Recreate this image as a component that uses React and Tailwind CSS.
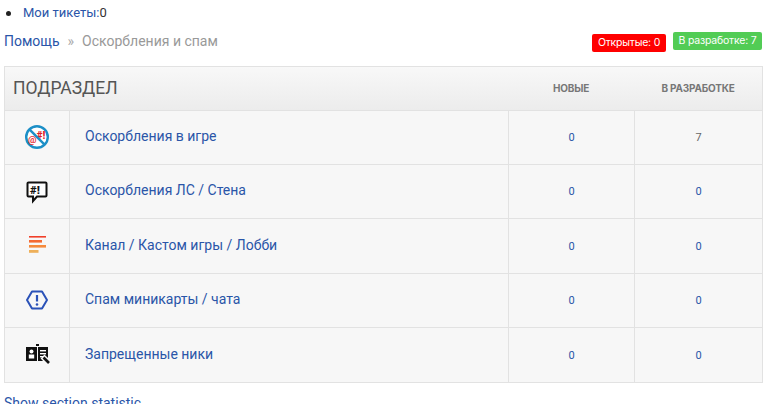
const LINK = "text-[#2a55a8]";

function IconNoSwear() {
  return (
    <svg width="26" height="26" viewBox="0 1 26 26" fill="none">
      <circle cx="13" cy="13" r="10.8" stroke="#1c8fc7" strokeWidth="2.4" fill="#fff" />
      <text x="4" y="18.5" fontSize="9.5" fontWeight="700" fill="#e8333b" fontFamily="Roboto, sans-serif">@</text>
      <text x="12.5" y="14.5" fontSize="10.5" fontWeight="900" fill="#e01f2b" fontFamily="Roboto, sans-serif">#!</text>
      <path d="M5.4 5.4 L20.6 20.6" stroke="#1c8fc7" strokeWidth="2.4" />
    </svg>
  );
}

function IconChat() {
  return (
    <svg width="22" height="24" viewBox="0 0 22 24" fill="none">
      <path d="M2.5 2.5h17a1 1 0 0 1 1 1v12a1 1 0 0 1-1 1H11l-4 4.5v-4.5H2.5a1 1 0 0 1-1-1v-12a1 1 0 0 1 1-1z" stroke="#111" strokeWidth="2" fill="#fff" />
      <text x="4" y="14" fontSize="11.5" fontWeight="900" fill="#111" fontFamily="Roboto, sans-serif">#!</text>
    </svg>
  );
}

function IconBars() {
  return (
    <svg width="20" height="20" viewBox="0 2 20 20">
      <rect x="2" y="1" width="17" height="2.6" fill="#f0402a" />
      <rect x="2" y="6" width="13" height="2.6" fill="#f46a33" />
      <rect x="2" y="11" width="17" height="2.6" fill="#f58a3c" />
      <rect x="2" y="16" width="9.5" height="2.8" fill="#eeb05a" />
    </svg>
  );
}

function IconHex() {
  return (
    <svg width="24" height="22" viewBox="0 1 24 22" fill="none">
      <path d="M7 2.5h10l5 8.5-5 8.5H7L2 11z" stroke="#2b52b8" strokeWidth="2" strokeLinejoin="round" />
      <path d="M12 6v6.5" stroke="#2b52b8" strokeWidth="2.2" />
      <circle cx="12" cy="15.5" r="1.3" fill="#2b52b8" />
    </svg>
  );
}

function IconNick() {
  return (
    <svg width="26" height="24" viewBox="-1 1 26 24" fill="none">
      <rect x="1" y="5" width="11" height="14" fill="#111" />
      <rect x="13" y="5" width="10" height="14" fill="#111" />
      <rect x="11" y="2" width="3" height="2" fill="#111" />
      <circle cx="6.5" cy="9.5" r="2" fill="#fff" />
      <rect x="3.8" y="12.5" width="5.4" height="4" fill="#fff" />
      <rect x="15" y="8" width="6" height="1.4" fill="#fff" />
      <rect x="15" y="11" width="6" height="1.4" fill="#fff" />
      <rect x="15" y="14" width="3" height="1.4" fill="#fff" />
      <path d="M17.5 14.5l7 7" stroke="#f7f7f7" strokeWidth="5.5" />
      <path d="M18.5 15.5l5.5 5.5" stroke="#111" strokeWidth="2.6" />
    </svg>
  );
}

const rows = [
  { icon: <IconNoSwear />, title: "Оскорбления в игре", a: 0, b: 7, h: "h-[54px]" },
  { icon: <IconChat />, title: "Оскорбления ЛС / Стена", a: 0, b: 0, h: "h-[54px]" },
  { icon: <IconBars />, title: "Канал / Кастом игры / Лобби", a: 0, b: 0, h: "h-[55px]" },
  { icon: <IconHex />, title: "Спам миникарты / чата", a: 0, b: 0, h: "h-[54px]" },
  { icon: <IconNick />, title: "Запрещенные ники", a: 0, b: 0, h: "h-[54px]" },
];

export default function App() {
  return (
    <div className="h-[404px] w-[768px] overflow-hidden bg-white font-['Roboto',sans-serif] text-[14px] text-[#333]">
      <ul className="ml-[5px] flex h-[26px] items-center">
        <li className="flex items-center">
          <span className="ml-[1px] mr-[12px] h-[5px] w-[5px] rounded-full bg-[#222]" />
          <span className={`text-[13px] ${LINK}`}>Мои тикеты:</span>
          <span className="text-[13px]">0</span>
        </li>
      </ul>

      <div className="flex h-[40px] items-start justify-between pl-[4px] pr-[6px]">
        <div className="flex pt-[5px] text-[14px] leading-[20px]">
          <span className={LINK}>Помощь</span>
          <span className="ml-[8px] text-[#aaa]">»</span>
          <span className="ml-[8px] text-[#999]">Оскорбления и спам</span>
        </div>
        <div className="flex items-start gap-[7px] pt-[6px] font-['Inter',sans-serif] text-[10.5px]">
          <span className="mt-[2px] flex h-[18px] w-[74px] items-center justify-center rounded-[2px] bg-[#ff0000] tracking-[-0.2px] text-white">Открытые: 0</span>
          <span className="flex h-[18px] w-[89px] items-center justify-center rounded-[2px] bg-[#52cc55] tracking-[-0.2px] text-white">В разработке: 7</span>
        </div>
      </div>

      <div className="ml-[4px] w-[759px] border border-[#e2e2e2] bg-[#f7f7f7]">
        <div className="flex h-[44px] items-center border-b border-[#e2e2e2] bg-gradient-to-b from-[#f8f8f8] to-[#ececec] text-[#666]">
          <div className="flex-1 pl-[8px] text-[17.5px] text-[#555]">ПОДРАЗДЕЛ</div>
          <div className="w-[126px] text-center font-['Inter',sans-serif] text-[10px] font-bold tracking-[-0.2px] text-[#777]">НОВЫЕ</div>
          <div className="w-[128px] text-center font-['Inter',sans-serif] text-[10px] font-bold tracking-[-0.2px] text-[#777]">В РАЗРАБОТКЕ</div>
        </div>
        {rows.map((r, i) => (
          <div key={i} className={`flex ${r.h} ${i < rows.length - 1 ? "border-b border-[#e2e2e2]" : ""}`}>
            <div className="flex w-[65px] items-center justify-center border-r border-[#e2e2e2]">{r.icon}</div>
            <div className={`flex flex-1 items-center pb-[2px] pl-[15px] text-[14px] ${LINK}`}>{r.title}</div>
            <div className={`flex w-[126px] items-center justify-center border-l border-[#e2e2e2] pt-[2px] text-[11px] ${LINK}`}>{r.a}</div>
            <div className={`flex w-[128px] items-center justify-center border-l border-[#e2e2e2] pt-[2px] text-[11px] ${r.b ? "text-[#666]" : LINK}`}>{r.b}</div>
          </div>
        ))}
      </div>

      <div className={`ml-[4px] mt-[10px] text-[14px] ${LINK}`}>Show section statistic</div>
    </div>
  );
}
